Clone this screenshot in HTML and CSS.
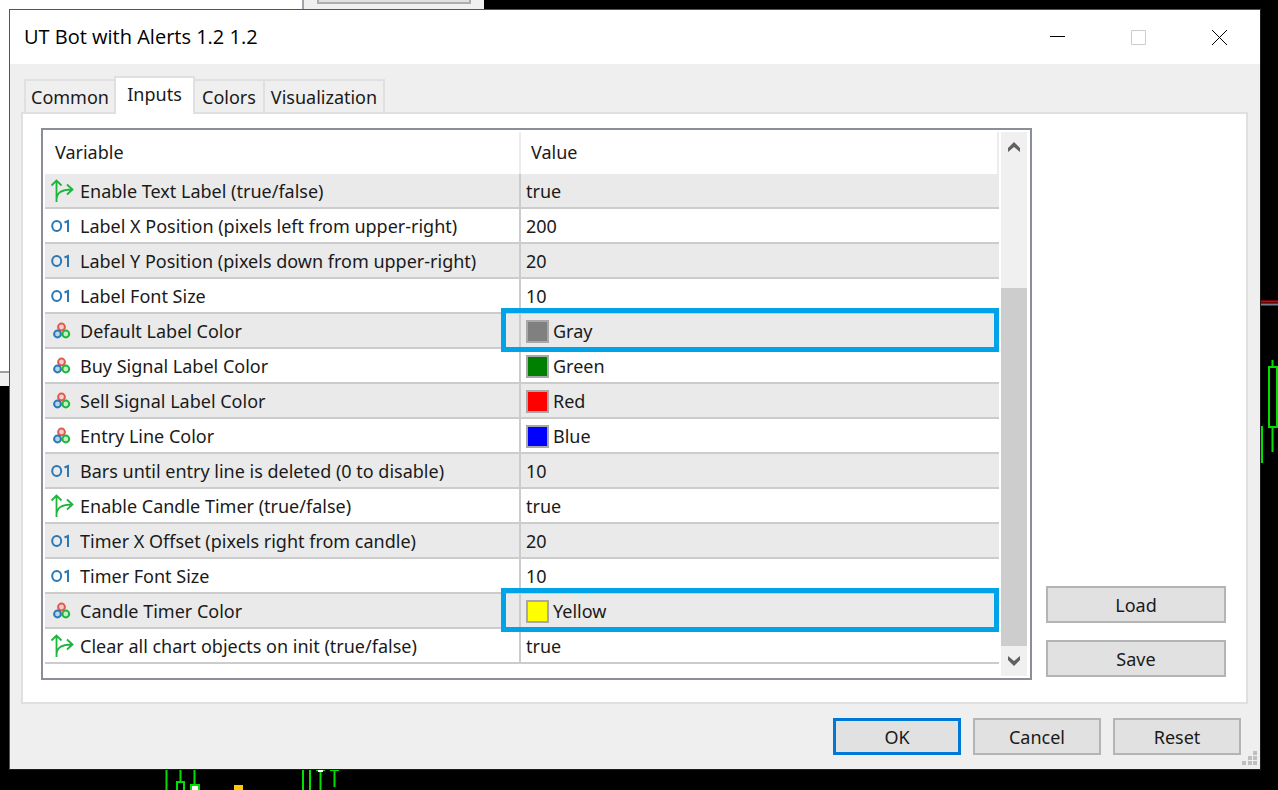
FILE: index.html
```html
<!DOCTYPE html>
<html lang="en">
<head>
    <meta charset="utf-8">
    <title>UT Bot with Alerts 1.2 1.2</title>
    <link rel="stylesheet" href="styles.css">
</head>
<body>
    <!-- icons used in the table -->
    <svg class="icon-defs" width="0" height="0" aria-hidden="true">
        <symbol id="icon-bool" viewBox="0 0 24 24">
            <path d="M6.5 23V2M1.5 6.5L6.5 1.5l5 5M6.5 21c0-7 5-10.500 15.500-10.500M17 5.500l5.500 5-5.500 5" fill="none" stroke="#1db53a" stroke-width="1.800"/>
        </symbol>
        <symbol id="icon-number" viewBox="0 0 24 24">
            <ellipse cx="6.700" cy="12" rx="4.500" ry="5" fill="none" stroke="#2b78b5" stroke-width="2"/>
            <path d="M14.500 8.500L18 7v11" fill="none" stroke="#2b78b5" stroke-width="2"/>
        </symbol>
        <symbol id="icon-color" viewBox="0 0 24 24">
            <circle cx="11.500" cy="8" r="3.400" fill="#f8d0cc" stroke="#e2594f" stroke-width="2"/>
            <circle cx="15.800" cy="15" r="3.400" fill="#c6efcb" stroke="#1db53a" stroke-width="2"/>
            <circle cx="7.500" cy="15" r="3.400" fill="#b5d5ec" stroke="#2b78b5" stroke-width="2"/>
        </symbol>
    </svg>

    <div class="desktop">
        <div class="back-window">
            <div class="back-side"><div class="back-button"></div></div>
        </div>
        <svg class="chart" aria-hidden="true">
            <path d="M1260 301.500h18" stroke="#e00000" stroke-width="2"/>
            <path d="M1260 304.500h18" stroke="#708090" stroke-width="2"/>
            <g fill="none" stroke="#00e000" stroke-width="2">
                <path d="M1272.500 360v7M1272.500 428v24M1269 367h8v60h-8zM1260 427h2v35h-2"/>
                <path d="M166.500 769v21M180.500 769v13M177 790v-8h7v8M194.500 769v16"/>
                <path d="M303 769v21M310 769v21M320.500 770v20M334.500 770v17M330 770h9M316 770h9"/>
                <path d="M191 790v-5h8v5" fill="#fff"/>
            </g>
            <path d="M318 770h5v2h-5z" fill="#fff"/>
            <path d="M234 785h9v5h-9z" fill="#ffc800"/>
        </svg>

        <div class="dialog">
            <div class="titlebar">
                <span class="title">UT Bot with Alerts 1.2 1.2</span>
                <button class="window-button" aria-label="Minimize">
                    <svg width="15" height="15"><path d="M0 6.500h15" stroke="#000"/></svg>
                </button>
                <button class="window-button" aria-label="Maximize" disabled>
                    <svg width="15" height="15"><path d="M.5.5h14v14H.5z" fill="none" stroke="#ccc"/></svg>
                </button>
                <button class="window-button" aria-label="Close">
                    <svg width="15" height="15"><path d="M0 0l15 15M15 0L0 15" stroke="#000"/></svg>
                </button>
            </div>

            <div class="content">
                <div class="tabs" role="tablist">
                    <button class="tab tab-common" role="tab">Common</button>
                    <button class="tab tab-inputs active" role="tab" aria-selected="true">Inputs</button>
                    <button class="tab tab-colors" role="tab">Colors</button>
                    <button class="tab tab-visual" role="tab">Visualization</button>
                </div>

                <div class="panel">
                    <div class="list">
                        <table class="inputs">
                            <thead>
                                <tr><th class="col-name">Variable</th><th>Value</th></tr>
                            </thead>
                            <tbody>
                                <tr><td><svg class="icon"><use href="#icon-bool"/></svg>Enable Text Label (true/false)</td><td>true</td></tr>
                                <tr><td><svg class="icon"><use href="#icon-number"/></svg>Label X Position (pixels left from upper-right)</td><td>200</td></tr>
                                <tr><td><svg class="icon"><use href="#icon-number"/></svg>Label Y Position (pixels down from upper-right)</td><td>20</td></tr>
                                <tr><td><svg class="icon"><use href="#icon-number"/></svg>Label Font Size</td><td>10</td></tr>
                                <tr><td><svg class="icon"><use href="#icon-color"/></svg>Default Label Color</td><td class="marked"><span class="swatch gray"></span>Gray</td></tr>
                                <tr><td><svg class="icon"><use href="#icon-color"/></svg>Buy Signal Label Color</td><td><span class="swatch green"></span>Green</td></tr>
                                <tr><td><svg class="icon"><use href="#icon-color"/></svg>Sell Signal Label Color</td><td><span class="swatch red"></span>Red</td></tr>
                                <tr><td><svg class="icon"><use href="#icon-color"/></svg>Entry Line Color</td><td><span class="swatch blue"></span>Blue</td></tr>
                                <tr><td><svg class="icon"><use href="#icon-number"/></svg>Bars until entry line is deleted (0 to disable)</td><td>10</td></tr>
                                <tr><td><svg class="icon"><use href="#icon-bool"/></svg>Enable Candle Timer (true/false)</td><td>true</td></tr>
                                <tr><td><svg class="icon"><use href="#icon-number"/></svg>Timer X Offset (pixels right from candle)</td><td>20</td></tr>
                                <tr><td><svg class="icon"><use href="#icon-number"/></svg>Timer Font Size</td><td>10</td></tr>
                                <tr><td><svg class="icon"><use href="#icon-color"/></svg>Candle Timer Color</td><td class="marked"><span class="swatch yellow"></span>Yellow</td></tr>
                                <tr><td><svg class="icon"><use href="#icon-bool"/></svg>Clear all chart objects on init (true/false)</td><td>true</td></tr>
                            </tbody>
                        </table>
                        <div class="scrollbar">
                            <button class="scroll-arrow" aria-label="Scroll up">
                                <svg width="14" height="12"><path d="M1 11V7l6-6 6 6v4L7 6z" fill="#606060"/></svg>
                            </button>
                            <div class="scroll-track"><div class="scroll-thumb"></div></div>
                            <button class="scroll-arrow" aria-label="Scroll down">
                                <svg width="14" height="12"><path d="M1 1v4l6 6 6-6V1L7 6z" fill="#606060"/></svg>
                            </button>
                        </div>
                    </div>
                    <div class="side">
                        <button class="button">Load</button>
                        <button class="button">Save</button>
                    </div>
                </div>
            </div>

            <div class="footer">
                <button class="button default">OK</button>
                <button class="button">Cancel</button>
                <button class="button">Reset</button>
            </div>
            <svg class="grip" width="15" height="15" aria-hidden="true">
                <path d="M11 0h4v4h-4zM6 5h4v4H6zM11 5h4v4h-4zM0 10h4v4H0zM6 10h4v4H6zM11 10h4v4h-4z" fill="#bfbfbf"/>
            </svg>
        </div>
    </div>
</body>
</html>
```
FILE: styles.css
```css
* {
    box-sizing: border-box;
}
body {
    margin: 0;
    background-color: #000;
    color: #1a1a1a;
    font-family: "Noto Sans", sans-serif;
    font-size: 18px;
    line-height: 24px;
}
button {
    font: inherit;
    color: inherit;
    padding: 0;
    border: none;
    background: none;
}
.icon-defs {
    position: absolute;
}
.desktop {
    position: relative;
    min-height: 100vh;
    padding: 9px 17px 20px 9px;
    overflow: hidden;
}

/* window and chart behind the dialog */
.back-window {
    position: absolute;
    top: 0;
    left: 0;
    width: 484px;
    height: 386px;
    background-color: #fff;
    border-bottom: 13px solid #f0f0f0;
    box-shadow: inset 0 -2px 0 #9a9ea6;
}
.back-side {
    height: 20px;
    margin-left: 302px;
    padding: 0 13px;
    border-left: 2px solid #a0a4ac;
    background-color: #f0f0f0;
}
.back-button {
    height: 4px;
    border: 2px solid #adadad;
    border-top: none;
    background-color: #e1e1e1;
}
.chart {
    position: absolute;
    top: 0;
    left: 0;
    width: 100%;
    height: 100%;
}

/* dialog */
.dialog {
    position: relative;
    border: 1px solid #555;
    border-right-color: #1c1c1c;
    border-bottom-color: #1c1c1c;
    background-color: #efefef;
}
.titlebar {
    display: flex;
    align-items: center;
    height: 54px;
    padding-left: 14px;
    background-color: #fff;
    color: #000;
}
.title {
    flex: 1;
    font-family: "Open Sans", sans-serif;
    font-size: 20px;
}
.window-button {
    display: flex;
    align-items: center;
    justify-content: center;
    width: 81px;
    height: 54px;
}
.content {
    padding: 12px 12px 0 11px;
}
.tabs {
    display: flex;
    align-items: flex-end;
    padding-left: 3px;
}
.tab {
    height: 33px;
    border: 2px solid #e0e0e0;
    border-left: none;
    border-bottom: none;
}
.tab-common {
    width: 90px;
    border-left: 2px solid #e0e0e0;
    border-right: none;
}
.tab-inputs {
    width: 81px;
}
.tab-colors {
    width: 70px;
}
.tab-visual {
    width: 120px;
}
.tab.active {
    position: relative;
    height: 38px;
    margin-bottom: -2px;
    padding-bottom: 4px;
    border-left: 2px solid #e0e0e0;
    background-color: #fff;
}
.panel {
    display: flex;
    gap: 14px;
    padding: 14px 20px 22px 18px;
    border: 2px solid #e0e0e0;
    background-color: #fff;
}
.list {
    flex: 1;
    display: flex;
    gap: 2px;
    padding: 2px 3px 2px 2px;
    border: 2px solid #8a8e98;
}
.inputs {
    flex: 1;
    align-self: flex-start;
    table-layout: fixed;
    border-collapse: separate;
    border-spacing: 0;
    margin-bottom: 12px;
}
.inputs th {
    height: 42px;
    padding: 0 10px 2px;
    border-right: 2px solid #ececec;
    font-weight: normal;
    text-align: left;
}
.inputs td {
    height: 35px;
    padding: 0 5px;
    border-bottom: 2px solid #ccc;
    white-space: nowrap;
}
.inputs td:first-child {
    border-right: 2px solid #ccc;
}
.inputs tbody tr:nth-child(odd) {
    background-color: #eaeaea;
}
.col-name {
    width: 476px;
}
.icon {
    width: 24px;
    height: 24px;
    margin-right: 6px;
    vertical-align: bottom;
}
.swatch {
    display: inline-block;
    width: 23px;
    height: 23px;
    margin-right: 4px;
    border: 2px solid #a8a8a8;
    vertical-align: bottom;
}
.gray {
    background-color: #808080;
}
.green {
    background-color: #008000;
}
.red {
    background-color: #f00;
}
.blue {
    background-color: #00f;
}
.yellow {
    background-color: #ff0;
}
.marked {
    position: relative;
}
.marked::after {
    content: "";
    position: absolute;
    top: -6px;
    right: 0;
    bottom: -5px;
    left: -20px;
    border: 5px solid #00a2e8;
}
.scrollbar {
    display: flex;
    flex-direction: column;
    width: 26px;
    background-color: #f0f0f0;
}
.scroll-arrow {
    display: flex;
    align-items: center;
    justify-content: center;
    height: 30px;
}
.scroll-track {
    flex: 1;
    display: flex;
    align-items: flex-end;
}
.scroll-thumb {
    width: 100%;
    height: 74%;
    background-color: #cdcdcd;
}
.side {
    display: flex;
    flex-direction: column;
    justify-content: flex-end;
    gap: 17px;
    width: 180px;
    padding-bottom: 3px;
}
.button {
    height: 37px;
    border: 2px solid #b4b4b4;
    background-color: #e1e1e1;
}
.footer {
    display: flex;
    justify-content: flex-end;
    gap: 12px;
    padding: 14px 19px 14px;
}
.footer .button {
    width: 128px;
}
.button.default {
    border: 3px solid #0078d7;
}
.grip {
    position: absolute;
    right: 3px;
    bottom: 3px;
}
```
